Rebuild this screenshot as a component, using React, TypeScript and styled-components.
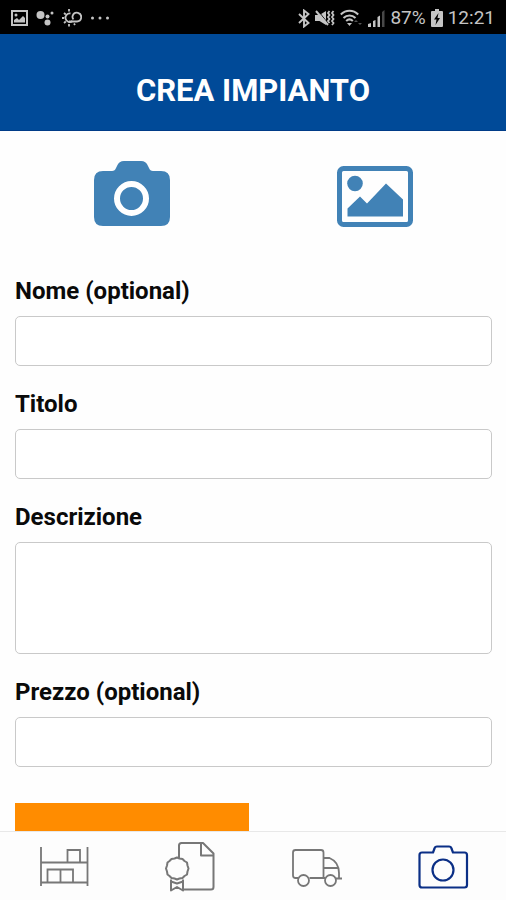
import React, { useState } from "react";
import styled, { createGlobalStyle } from "styled-components";

const GlobalStyle = createGlobalStyle`
  *, *::before, *::after { box-sizing: border-box; }
  body {
    margin: 0;
    background: #fefefe;
    color: #0a0a0a;
    font-family: Roboto, "Liberation Sans", sans-serif;
  }
`;

const Screen = styled.div`
  display: flex;
  flex-direction: column;
  height: 100vh;
  overflow: hidden;
`;

const StatusBar = styled.div`
  display: flex;
  flex: none;
  align-items: center;
  justify-content: space-between;
  height: 34px;
  padding: 2px 11px 0;
  background: #000;
  color: #c4c4c4;
  font-size: 19px;
  line-height: 32px;

  svg {
    display: block;
  }
`;

const StatusGroup = styled.div<{ $gap: number }>`
  display: flex;
  align-items: center;
  gap: ${(p) => p.$gap}px;
`;

const Header = styled.header`
  display: flex;
  flex: none;
  align-items: center;
  justify-content: center;
  height: 97px;
  padding-top: 17px;
  background: #004a98;
  border-bottom: 1px solid #003c88;
`;

const Title = styled.h1`
  margin: 0;
  color: #fff;
  font-size: 31px;
  font-weight: 700;
  line-height: 40px;
`;

const Content = styled.main`
  flex: 1;
  min-height: 0;
  overflow: hidden;
`;

const PhotoSources = styled.div`
  display: grid;
  grid-template-columns: 1fr 1fr;
  justify-items: center;
  padding: 30px 10px 0;
`;

const SourceButton = styled.button`
  padding: 0;
  border: 0;
  background: none;
  color: #4182b6;
  cursor: pointer;

  svg {
    display: block;
  }
`;

const Form = styled.form`
  display: flex;
  flex-direction: column;
  align-items: stretch;
  gap: 24px;
  padding: 50px 14px 0 15px;
`;

const Field = styled.div`
  display: flex;
  flex-direction: column;
  gap: 11px;
`;

const Label = styled.label`
  font-size: 24px;
  font-weight: 700;
  line-height: 28px;
`;

const TextInput = styled.input`
  width: 100%;
  height: 50px;
  padding: 0 12px;
  border: 1px solid #c9c9c9;
  border-radius: 5px;
  background: #fff;
  font: inherit;
  font-size: 22px;
`;

const TextArea = styled.textarea`
  display: block;
  width: 100%;
  height: 112px;
  padding: 12px;
  border: 1px solid #c9c9c9;
  border-radius: 5px;
  background: #fff;
  font: inherit;
  font-size: 22px;
  resize: none;
`;

const SubmitButton = styled.button`
  align-self: flex-start;
  width: 49%;
  height: 56px;
  margin-top: 12px;
  border: 0;
  background: #ff8c00;
  cursor: pointer;
`;

const TabBar = styled.nav`
  display: grid;
  flex: none;
  grid-template-columns: repeat(4, 1fr);
  height: 69px;
  padding: 2px 0 0 1px;
  border-top: 1px solid #e8e8e8;
  background: #fdfdfd;
`;

const Tab = styled.button<{ $active: boolean }>`
  display: flex;
  align-items: center;
  justify-content: center;
  padding: 0;
  border: 0;
  background: none;
  color: ${(p) => (p.$active ? "#0b2f86" : "#777")};
  cursor: pointer;
`;

const ScreenshotIcon = () => (
  <svg width="17" height="16" viewBox="0 0 17 16" fill="none">
    <rect x="1" y="1" width="15" height="14" stroke="currentColor" strokeWidth="2" />
    <circle cx="5" cy="5" r="1.5" fill="currentColor" />
    <path d="M3 12.500V10l3-2 2 2 4-4 2 2v4.500z" fill="currentColor" />
  </svg>
);

const AssistantIcon = () => (
  <svg width="18" height="16" viewBox="0 0 18 16" fill="currentColor">
    <circle cx="4.500" cy="5" r="4" />
    <circle cx="11.500" cy="6.500" r="2" />
    <circle cx="16" cy="3" r="1.500" />
    <circle cx="11.500" cy="12.500" r="3" />
  </svg>
);

const WeatherIcon = () => (
  <svg width="20" height="18" viewBox="0 0 20 18" fill="none" stroke="currentColor" strokeWidth="1.8">
    <path d="M8.500 4.500a4.300 4.300 0 1 0 2 7.500" />
    <path d="M7 12.500h8a4.400 4.400 0 1 0-4.200-6.200c-.6 1.500-.3 3 .7 4" />
    <path d="M7 0v2.500M7 15v2.500M0 9h2M2 4l1.800 1.500M2 14l1.800-1.500M12 14.500l1 1.500" />
  </svg>
);

const MoreIcon = () => (
  <svg width="20" height="4" viewBox="0 0 20 4" fill="currentColor">
    <circle cx="2.500" cy="2" r="1.500" />
    <circle cx="10" cy="2" r="1.500" />
    <circle cx="17.500" cy="2" r="1.500" />
  </svg>
);

const BluetoothIcon = () => (
  <svg width="12" height="19" viewBox="0 0 12 19" fill="none" stroke="currentColor" strokeWidth="1.900">
    <path d="M1 5l9.500 9L6 17.500v-16L10.500 5 1 14" />
  </svg>
);

const VibrateIcon = () => (
  <svg width="20" height="18" viewBox="0 0 20 18">
    <path d="M0 6h4.500L11 2v14l-6.500-4H0z" fill="currentColor" />
    <path d="M2.500 1l11 14" stroke="#000" strokeWidth="1" />
    <path d="M1 2l12 14" stroke="currentColor" strokeWidth="2" />
    <path
      d="M14.500 2l-1.500 2 1.500 2-1.500 2 1.500 2-1.500 2 1.500 2M18.500 2L17 4l1.500 2L17 8l1.500 2-1.500 2 1.500 2-1.500 2"
      fill="none"
      stroke="currentColor"
      strokeWidth="1.800"
    />
  </svg>
);

const WifiIcon = () => (
  <svg width="23" height="18" viewBox="0 0 23 18" fill="none" stroke="currentColor" strokeWidth="2">
    <path d="M.8 5.500c5-5 12.400-5 17.400 0M3.500 9c3.500-3.500 8.500-3.500 12 0M6.200 12c2-2 4.600-2 6.600 0" />
    <path d="M7 14h5l-2.500 3z" fill="currentColor" stroke="none" />
    <path d="M14 13l2-2 2 2zM18 14l2 2 2-2z" fill="#555" stroke="none" />
  </svg>
);

const SignalIcon = () => (
  <svg width="17" height="17" viewBox="0 0 17 17">
    <path d="M0 17v-3l3-1v4zM5 17v-6l2.500-1v7zM9.500 17V7L12 5.500V17z" fill="currentColor" />
    <path d="M14 17V2l2.500-2v17z" fill="#484848" />
  </svg>
);

const BatteryIcon = () => (
  <svg width="12" height="18" viewBox="0 0 12 18">
    <path d="M4 0h4v2h3a1 1 0 0 1 1 1v14a1 1 0 0 1-1 1H1a1 1 0 0 1-1-1V3a1 1 0 0 1 1-1h3z" fill="currentColor" />
    <path d="M7.500 4L3 10.500h2.500L4.500 16 9 9H6.500z" fill="#000" />
  </svg>
);

const CameraSolidIcon = () => (
  <svg width="76" height="66" viewBox="0 0 76 66">
    <path
      d="M9 10h9q3 0 4-3l1-2q2-5 7-5h17q5 0 7 5l1 2q1 3 4 3h8q9 0 9 9v37q0 9-9 9H9Q0 65 0 56V19Q0 10 9 10z"
      fill="currentColor"
    />
    <circle cx="37.500" cy="37.500" r="14.500" fill="none" stroke="#fff" strokeWidth="6" />
  </svg>
);

const GalleryIcon = () => (
  <svg width="76" height="66" viewBox="0 0 76 66">
    <rect x="2.500" y="7.500" width="71" height="56" rx="4" fill="none" stroke="currentColor" strokeWidth="5" />
    <circle cx="18" cy="22.500" r="7.800" fill="currentColor" />
    <path d="M10.500 55.500v-8l12.500-12 7 7 19-20 17 16v17z" fill="currentColor" />
  </svg>
);

const ShelfIcon = () => (
  <svg width="52" height="52" viewBox="0 0 52 52" fill="none" stroke="currentColor" strokeWidth="1.800">
    <path d="M3 6v39M49.500 6v39M3 21.500h46.500M3 41.500h46.500" />
    <path d="M29.500 21.500V9H42v12.500M9.500 41.500v-13h25.500v13M22.500 28.500v13" />
  </svg>
);

const CertificateIcon = () => (
  <svg width="52" height="52" viewBox="0 0 52 52" fill="none" stroke="currentColor" strokeWidth="2" strokeLinejoin="round">
    <path d="M15 17V4.500Q15 2 17.500 2H39l10.500 10.500V46q0 2.500-2.500 2.500H20M37 2v12.500h12.500" />
    <path d="M10.500 17.500l2.500-1 2.500 1 3 .5 2 2 2.500 1.500.5 3 1 3-1 3-.5 3-2.500 1.500-2 2-3 .5-2.500 1-2.500-1-3-.5-2-2-2-1.500-.5-3-1-3 1-3 .5-3 2-1.500 2-2z" />
    <path d="M7 38.500v11l6-3.500 6 3.500v-11M7 40.500l6 2 6-2" />
  </svg>
);

const TruckIcon = () => (
  <svg width="52" height="52" viewBox="0 0 52 52" fill="none" stroke="currentColor" strokeWidth="1.800">
    <path d="M7 37H4.500Q2 37 2 34.500V11.500Q2 9 4.500 9H30q2.500 0 2.500 2.500V37M18.500 37h15.500M32.500 17h6q9.500 4 9.500 15v5M51 37.500h-6M32.500 27h14.500" />
    <circle cx="12.500" cy="39.500" r="5.500" />
    <circle cx="39.500" cy="39.500" r="5.500" />
  </svg>
);

const CameraOutlineIcon = () => (
  <svg width="52" height="52" viewBox="0 0 52 52" fill="none" stroke="currentColor" strokeWidth="2.200" strokeLinejoin="round">
    <path d="M5 11.500h11l1.500-4Q18 5.500 20 5.500h12q2 0 2.500 2l1.500 4h11.500q2.500 0 2.500 2.500v30q0 2.500-2.500 2.500H5Q2.500 46.500 2.500 44V14Q2.500 11.500 5 11.500z" />
    <circle cx="26" cy="29" r="10.500" />
  </svg>
);

const tabs = [
  { label: "Scaffalature", Icon: ShelfIcon },
  { label: "Certificati", Icon: CertificateIcon },
  { label: "Consegne", Icon: TruckIcon },
  { label: "Crea impianto", Icon: CameraOutlineIcon },
];

export default function App() {
  const [active, setActive] = useState(3);

  return (
    <Screen>
      <GlobalStyle />
      <StatusBar>
        <StatusGroup $gap={8}>
          <ScreenshotIcon />
          <AssistantIcon />
          <WeatherIcon />
          <MoreIcon />
        </StatusGroup>
        <StatusGroup $gap={5}>
          <BluetoothIcon />
          <VibrateIcon />
          <WifiIcon />
          <SignalIcon />
          <span>87%</span>
          <BatteryIcon />
          <span>12:21</span>
        </StatusGroup>
      </StatusBar>
      <Header>
        <Title>CREA IMPIANTO</Title>
      </Header>
      <Content>
        <PhotoSources>
          <SourceButton type="button" aria-label="Scatta foto">
            <CameraSolidIcon />
          </SourceButton>
          <SourceButton type="button" aria-label="Scegli immagine">
            <GalleryIcon />
          </SourceButton>
        </PhotoSources>
        <Form onSubmit={(e: React.FormEvent) => e.preventDefault()}>
          <Field>
            <Label htmlFor="nome">Nome (optional)</Label>
            <TextInput id="nome" type="text" />
          </Field>
          <Field>
            <Label htmlFor="titolo">Titolo</Label>
            <TextInput id="titolo" type="text" />
          </Field>
          <Field>
            <Label htmlFor="descrizione">Descrizione</Label>
            <TextArea id="descrizione" />
          </Field>
          <Field>
            <Label htmlFor="prezzo">Prezzo (optional)</Label>
            <TextInput id="prezzo" type="text" inputMode="decimal" />
          </Field>
          <SubmitButton type="submit" aria-label="Crea" />
        </Form>
      </Content>
      <TabBar>
        {tabs.map(({ label, Icon }, i) => (
          <Tab
            key={label}
            type="button"
            aria-label={label}
            aria-current={i === active ? "page" : undefined}
            $active={i === active}
            onClick={() => setActive(i)}
          >
            <Icon />
          </Tab>
        ))}
      </TabBar>
    </Screen>
  );
}
